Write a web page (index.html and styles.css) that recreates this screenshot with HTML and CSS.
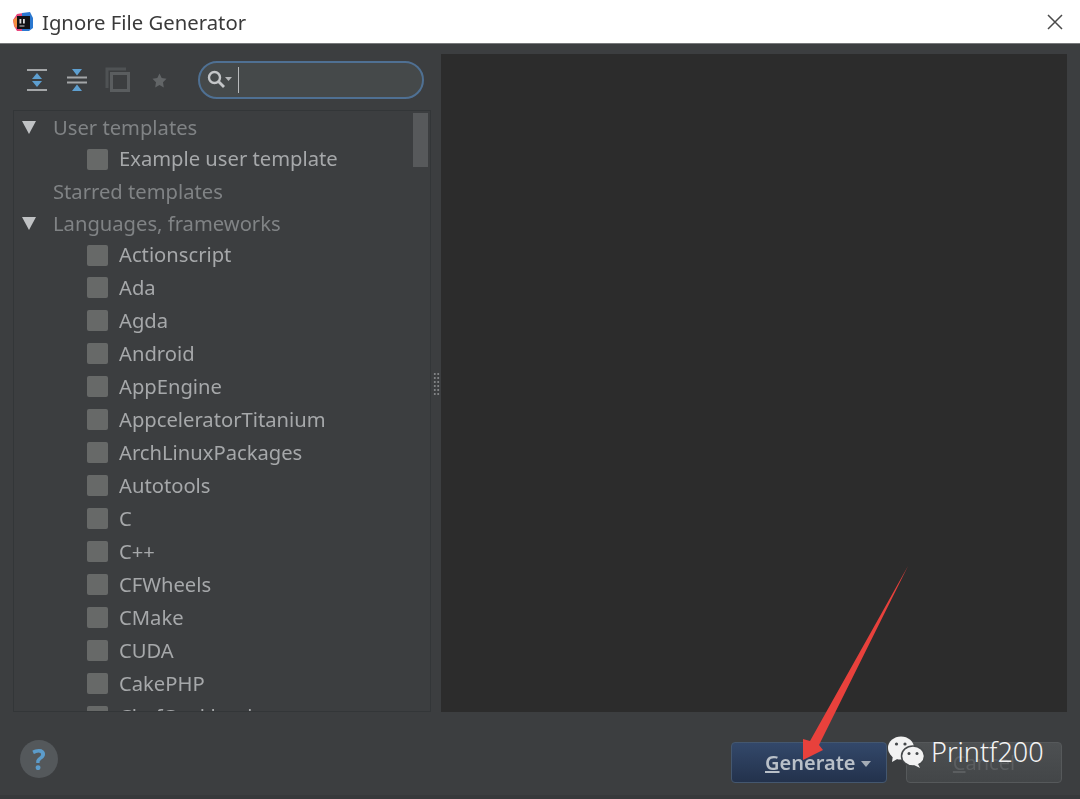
FILE: index.html
```html
<!DOCTYPE html>
<html lang="en">
<head>
    <meta charset="UTF-8">
    <meta name="viewport" content="width=device-width, initial-scale=1.0">
    <title>Ignore File Generator</title>
    <link rel="stylesheet" href="styles.css">
</head>
<body>

<div class="dialog">
    <!-- Title bar -->
    <div class="titlebar">
        <svg class="app-icon" width="22" height="22" viewBox="0 0 22 22">
            <path d="M1 9 L5 3 L11 2 L11 20 L5 20 L2 15 Z" fill="#e8467c"/>
            <path d="M1 9 L5 6 L6 15 L3 17 Z" fill="#f59040"/>
            <path d="M10 2 L18 1 L21 7 L21 17 L17 20 L10 20 Z" fill="#2b78d0"/>
            <rect x="5" y="5" width="13" height="13" fill="#121214"/>
            <rect x="7.500" y="8" width="1.800" height="4.500" fill="#dcdcdc"/>
            <rect x="11" y="8" width="1.800" height="4.500" fill="#dcdcdc"/>
            <rect x="7.500" y="14.500" width="5" height="1" fill="#cccccc"/>
        </svg>
        <span class="title-text">Ignore File Generator</span>
        <svg class="close-icon" width="18" height="18" viewBox="0 0 18 18">
            <path d="M2 2 L16 16 M16 2 L2 16" stroke="#4a4a4a" stroke-width="1.500" fill="none"/>
        </svg>
    </div>

    <div class="content">
        <!-- Left side -->
        <div class="left">
            <div class="toolbar">
                <svg class="tool-expand" width="22" height="24" viewBox="0 0 22 24">
                    <path d="M1 2 H21 M1 22 H21" stroke="#a4a6a8" stroke-width="2" fill="none"/>
                    <path d="M11 5 L16 11 H6 Z" fill="#5e9fd0"/>
                    <path d="M11 19 L16 13 H6 Z" fill="#5e9fd0"/>
                </svg>
                <svg class="tool-collapse" width="22" height="24" viewBox="0 0 22 24">
                    <path d="M1 9.500 H21 M1 14.500 H21" stroke="#a4a6a8" stroke-width="2" fill="none"/>
                    <path d="M11 7.500 L6 1 H16 Z M11 16.500 L6 23 H16 Z" fill="#5e9fd0"/>
                </svg>
                <svg class="tool-copy" width="26" height="26" viewBox="0 0 26 26">
                    <path d="M2 21 V2 H21" stroke="#4f5254" stroke-width="3" fill="none"/>
                    <rect x="6.500" y="6.500" width="17" height="17" stroke="#5a5d5f" stroke-width="3" fill="none"/>
                </svg>
                <svg class="tool-star" width="15" height="15" viewBox="0 0 15 15">
                    <path d="M7.500 0.500 L9.700 5 L14.500 5.700 L11 9.200 L11.800 14.500 L7.500 12 L3.200 14.500 L4 9.200 L0.500 5.700 L5.300 5 Z" fill="#626567"/>
                </svg>
                <div class="search">
                    <svg width="26" height="20" viewBox="0 0 26 20">
                        <circle cx="7.500" cy="7.500" r="5.500" stroke="#c4c6c8" stroke-width="2.400" fill="none"/>
                        <path d="M11.500 11.500 L17 17" stroke="#c4c6c8" stroke-width="2.800"/>
                        <path d="M18 7 H25 L21.500 11 Z" fill="#b4b6b8"/>
                    </svg>
                    <span class="caret"></span>
                </div>
            </div>

            <div class="tree">
                <div class="scrollbar"></div>
                <div class="row row-s group"><span class="arrow"></span>User templates</div>
                <div class="row row-s item"><span class="check"></span>Example user template</div>
                <div class="row row-s group"><span class="no-arrow"></span>Starred templates</div>
                <div class="row row-s group"><span class="arrow"></span>Languages, frameworks</div>
                <div class="row row-s item"><span class="check"></span>Actionscript</div>
                <div class="row item"><span class="check"></span>Ada</div>
                <div class="row item"><span class="check"></span>Agda</div>
                <div class="row item"><span class="check"></span>Android</div>
                <div class="row item"><span class="check"></span>AppEngine</div>
                <div class="row item"><span class="check"></span>AppceleratorTitanium</div>
                <div class="row item"><span class="check"></span>ArchLinuxPackages</div>
                <div class="row item"><span class="check"></span>Autotools</div>
                <div class="row item"><span class="check"></span>C</div>
                <div class="row item"><span class="check"></span>C++</div>
                <div class="row item"><span class="check"></span>CFWheels</div>
                <div class="row item"><span class="check"></span>CMake</div>
                <div class="row item"><span class="check"></span>CUDA</div>
                <div class="row item"><span class="check"></span>CakePHP</div>
                <div class="row item"><span class="check"></span>ChefCookbook</div>
            </div>
        </div>

        <div class="splitter"><span class="grip"></span></div>

        <div class="preview"></div>
    </div>

    <!-- Bottom buttons -->
    <div class="footer">
        <div class="help">?</div>
        <div class="buttons">
            <div class="button primary"><span><u>G</u>enerate</span><span class="drop"></span></div>
            <div class="button"><span><u>C</u>ancel</span></div>
        </div>
    </div>
</div>

<!-- Red annotation arrow -->
<svg class="annotation" width="1080" height="799" viewBox="0 0 1080 799">
    <path d="M908 566 L819 745 L823 750 L803 760 L803 739 L810 741 Z" fill="#e8413c"/>
</svg>

<!-- Watermark -->
<div class="watermark">
    <svg width="38" height="34" viewBox="0 0 38 34">
        <ellipse cx="14" cy="13" rx="13" ry="11.500" fill="#f2f2f2"/>
        <path d="M6 20 L5 27 L12 23 Z" fill="#f2f2f2"/>
        <ellipse cx="26" cy="21" rx="11.500" ry="10" fill="#f2f2f2" stroke="#45484a" stroke-width="1.500"/>
        <path d="M31 29 L33 33 L27 30 Z" fill="#f2f2f2"/>
        <circle cx="9.500" cy="9" r="1.600" fill="#45484a"/>
        <circle cx="18" cy="9" r="1.600" fill="#45484a"/>
        <circle cx="22" cy="18.500" r="1.500" fill="#45484a"/>
        <circle cx="30" cy="18.500" r="1.500" fill="#45484a"/>
    </svg>
    <span>Printf200</span>
</div>

</body>
</html>
```

FILE: styles.css
```css
body {
    margin: 0;
    padding: 0;
    font-family: "Noto Sans", "Open Sans", sans-serif;
    background-color: #3c3e40;
    overflow: hidden;
}

.dialog {
    width: 1080px;
    height: 799px;
    display: flex;
    flex-direction: column;
    background-color: #3c3e40;
    filter: blur(0.6px);
}

.titlebar {
    height: 43px;
    flex-shrink: 0;
    display: flex;
    align-items: center;
    padding: 0 16px 0 12px;
    background-color: #ffffff;
    border-bottom: 1px solid #77797a;
}

.app-icon {
    margin-right: 8px;
}

.title-text {
    font-size: 20.3px;
    color: #3a3a3a;
}

.close-icon {
    margin-left: auto;
}

.content {
    display: flex;
    height: 668px;
    flex-shrink: 0;
    padding: 10px 13px 0 13px;
    box-sizing: border-box;
}

.left {
    width: 418px;
    display: flex;
    flex-direction: column;
}

.toolbar {
    height: 56px;
    display: flex;
    align-items: center;
    padding: 0 7px 4px 13px;
    box-sizing: border-box;
}

.tool-collapse {
    margin-left: 18px;
}

.tool-copy {
    margin-left: 17px;
}

.tool-star {
    margin-left: 21px;
}

.search {
    width: 226px;
    height: 38px;
    margin-left: 31px;
    box-sizing: border-box;
    border: 2px solid #4f7093;
    border-radius: 19px;
    background-color: #45494a;
    display: flex;
    align-items: center;
    padding-left: 7px;
    gap: 5px;
}

.caret {
    width: 1px;
    height: 26px;
    background-color: #b8babc;
}

.tree {
    position: relative;
    height: 602px;
    overflow: hidden;
    box-sizing: border-box;
    border: 1px solid #333638;
}

.scrollbar {
    position: absolute;
    top: 2px;
    right: 2px;
    width: 15px;
    height: 54px;
    background-color: #57595b;
}

.row {
    height: 33px;
    display: flex;
    align-items: center;
    font-size: 20.2px;
    white-space: nowrap;
    box-sizing: border-box;
}

.row-s {
    height: 32px;
}

.group {
    color: #808385;
    padding-left: 8px;
}

.item {
    color: #a6a8aa;
    padding-left: 73px;
    padding-bottom: 2px;
}

.arrow {
    width: 0;
    height: 0;
    margin-right: 17px;
    border-left: 7px solid transparent;
    border-right: 7px solid transparent;
    border-top: 13px solid #c0c2c4;
}

.no-arrow {
    width: 14px;
    margin-right: 17px;
    flex-shrink: 0;
}

.check {
    width: 21px;
    height: 21px;
    margin: 2px 11px 0 0;
    flex-shrink: 0;
    border-radius: 2px;
    background-color: #676968;
}

.splitter {
    width: 10px;
    height: 658px;
    display: flex;
    align-items: center;
    justify-content: center;
}

.grip {
    width: 7px;
    height: 23px;
    background-image: radial-gradient(#808284 1px, transparent 1.3px);
    background-size: 3.5px 4px;
}

.preview {
    flex: 1;
    height: 658px;
    background-color: #2c2c2c;
}

.footer {
    flex: 1;
    display: flex;
    align-items: flex-start;
    justify-content: space-between;
    padding: 18px 18px 0 20px;
    border-bottom: 4px solid #37393b;
}

.help {
    width: 38px;
    height: 38px;
    margin-top: 10px;
    border-radius: 50%;
    background-color: #54585b;
    color: #5c9ccb;
    font-size: 28px;
    font-weight: 700;
    line-height: 38px;
    text-align: center;
}

.buttons {
    display: flex;
    gap: 19px;
    margin-top: 12px;
}

.button {
    width: 156px;
    height: 41px;
    box-sizing: border-box;
    border: 1px solid #56595b;
    border-radius: 4px;
    display: flex;
    align-items: center;
    justify-content: center;
    font-size: 20px;
    color: #5b5e60;
    background: linear-gradient(#4d5052, #434648);
}

.primary {
    justify-content: flex-start;
    padding-left: 33px;
    gap: 5px;
    border-color: #44576f;
    color: #b9c0c8;
    font-weight: 600;
    background: linear-gradient(#33486a, #23324c);
}

.drop {
    width: 0;
    height: 0;
    margin-top: 3px;
    border-left: 5.5px solid transparent;
    border-right: 5.5px solid transparent;
    border-top: 6px solid #a4acb6;
}

.annotation {
    position: absolute;
    top: 0;
    left: 0;
    filter: blur(0.4px);
}

.watermark {
    position: absolute;
    left: 887px;
    top: 733px;
    display: flex;
    align-items: center;
    gap: 6px;
    font-family: "Noto Sans", sans-serif;
    font-size: 27px;
    font-weight: 300;
    color: #f4f4f4;
}
```
